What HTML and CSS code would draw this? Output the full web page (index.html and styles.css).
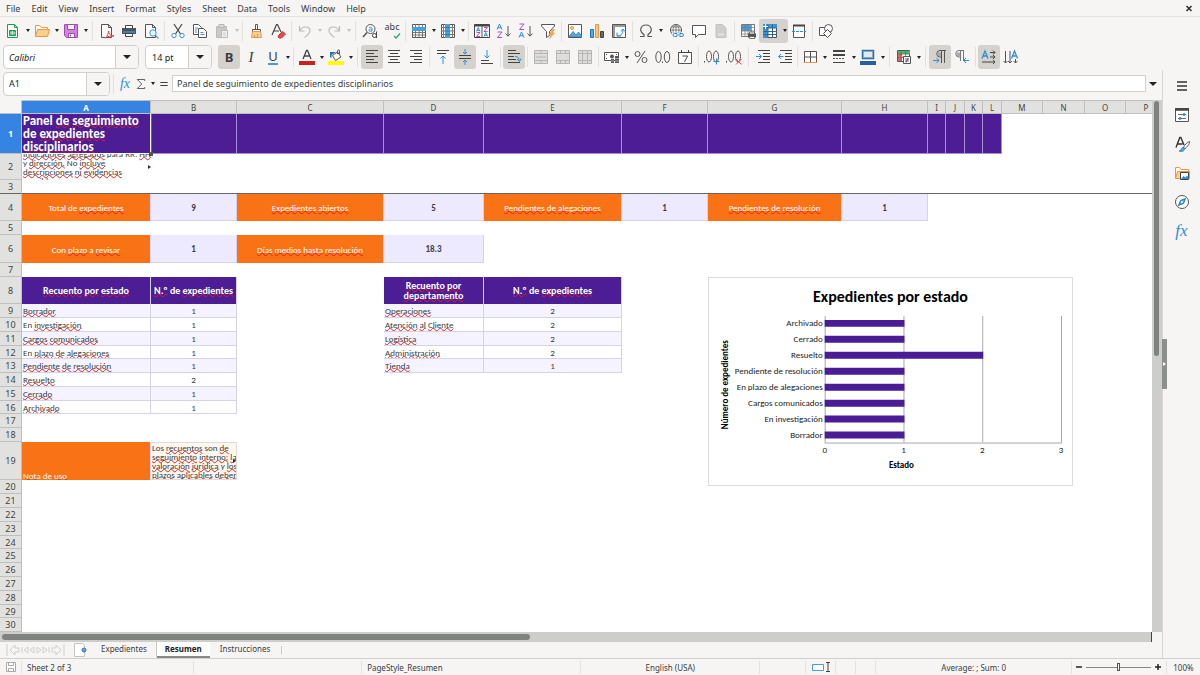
FILE: index.html
```html
<!DOCTYPE html>
<html lang="es">
<head>
<meta charset="utf-8">
<meta name="viewport" content="width=device-width, initial-scale=1">
<title>Panel de seguimiento de expedientes disciplinarios</title>
<link rel="stylesheet" href="styles.css">
</head>
<body>
<div class="app">

<header class="menubar" lang="en">
  <nav class="menus">
    <button>File</button><button>Edit</button><button>View</button><button>Insert</button><button>Format</button><button>Styles</button><button>Sheet</button><button>Data</button><button>Tools</button><button>Window</button><button>Help</button>
  </nav>
  <button class="close" aria-label="Close document"><svg viewBox="0 0 8 8"><path d="M1.500 2l5 5M6.500 2l-5 5" stroke="#2e3436" stroke-width="1.600"/></svg></button>
</header>

<div class="toolbar" role="toolbar" aria-label="Standard">
  <button class="tb" aria-label="New"><svg viewBox="0 0 16 16"><path d="M2.500 1.500h7l3 3v10h-10z" fill="#fff" stroke="#1b9e4b"/><path d="M9.500 1.500v3h3" stroke="#1b9e4b"/><path d="M4.500 7.500h6v5h-6z" fill="#55bd78" stroke="#1b9e4b"/><path d="M5 10h6M7.500 8v4" stroke="#fff" stroke-width=".6"/></svg></button><button class="caret" aria-label="New options"></button>
  <button class="tb" aria-label="Open"><svg viewBox="0 0 16 16"><path d="M1.500 13.500v-11h4l2 2h6v2" fill="#fff" stroke="#e8974a"/><path d="M1.500 13.500l2-7h12l-2 7z" fill="#fbd08a" stroke="#e8974a"/></svg></button><button class="caret" aria-label="Open options"></button>
  <button class="tb" aria-label="Save"><svg viewBox="0 0 16 16"><path d="M1.500 1.500h13v13h-11l-2-2z" fill="#cf86d6" stroke="#a04cab"/><path d="M4.500 1.500h7v5h-7z" fill="#f4f4f4" stroke="#a04cab"/><path d="M5.500 10.500h6v4h-6z" fill="#fff" stroke="#a04cab"/><path d="M7.500 11.500v2" stroke="#a04cab"/></svg></button><button class="caret" aria-label="Save options"></button>
  <span class="sep wide"></span>
  <button class="tb" aria-label="Export as PDF"><svg viewBox="0 0 16 16"><path d="M2.500 1.500h7l3 3v10h-10z" fill="#fafafa" stroke="#555"/><path d="M9.500 1.500v3h3" stroke="#555"/><path d="M6.500 15c2-2 3-5 3-7 1 4 3 5 5.500 5-3-.5-6 .2-8.500 2z" stroke="#e03b3b" fill="#fff"/></svg></button>
  <button class="tb" aria-label="Print"><svg viewBox="0 0 16 16"><path d="M4.500 5V2.500h7V5" fill="#fff" stroke="#444"/><path d="M1 5h14v6H1z" fill="#505356"/><path d="M2 9h12" stroke="#3d8fd1" stroke-width="1.500"/><path d="M4.500 10.500h7v3h-7z" fill="#fff" stroke="#444"/></svg></button>
  <button class="tb" aria-label="Print Preview"><svg viewBox="0 0 16 16"><path d="M2.500 1.500h7l3 3v10h-10z" fill="#fafafa" stroke="#555"/><path d="M9.500 1.500v3h3" stroke="#555"/><circle cx="10" cy="10" r="3.200" fill="#e8f3fb" stroke="#4596cf"/><path d="M12.400 12.400l3 3" stroke="#4596cf" stroke-width="1.300"/></svg></button>
  <span class="sep"></span>
  <button class="tb" aria-label="Cut"><svg viewBox="0 0 16 16"><path d="M4 1l6.500 10M12 1L5.500 11" stroke="#444" stroke-width="1.200"/><circle cx="4" cy="12.500" r="2.200" stroke="#4596cf"/><circle cx="12" cy="12.500" r="2.200" stroke="#4596cf"/></svg></button>
  <button class="tb" aria-label="Copy"><svg viewBox="0 0 16 16"><path d="M1.500 1.500h5l3 3v7h-8z" fill="#fff" stroke="#555"/><path d="M6.500 5.500h5l3 3v6h-8z" fill="#fff" stroke="#555"/><path d="M3 5h3M3 7h2M3 9h2M8.500 9.500h3M8.500 11.500h4" stroke="#4596cf"/></svg></button>
  <button class="tb" aria-label="Paste" disabled><svg viewBox="0 0 16 16"><path d="M2.500 3.500h10v11h-10z" fill="#c9c8c7" stroke="#bbb"/><path d="M5 1.500h5v3H5z" fill="#ddd" stroke="#b5b5b5"/><path d="M7.500 7.500h6v7h-6z" fill="#f0f0f0" stroke="#bbb"/><path d="M9 10h3M9 12h3" stroke="#ccc"/></svg></button><button class="caret dim" aria-label="Paste options"></button>
  <span class="sep"></span>
  <button class="tb" aria-label="Clone Formatting"><svg viewBox="0 0 16 16"><path d="M7.500 1.500h2v5h-2zM4.500 6.500h8v2h-8z" fill="#fff" stroke="#555"/><path d="M4.500 8.500h8l1 6h-10z" fill="#fbd08a" stroke="#e8974a"/><path d="M6.500 14v-2M9.500 14v-3" stroke="#e8974a"/></svg></button>
  <button class="tb" aria-label="Clear Direct Formatting"><svg viewBox="0 0 16 16"><path d="M2 12L6.500 1.500h1L11 9M4 8h5" stroke="#444" stroke-width="1.200"/><path d="M8 13l4.500-4.500 3 2.500-4 4H9z" fill="#e8484b" stroke="#c93338"/></svg></button>
  <span class="sep"></span>
  <button class="tb" aria-label="Undo" disabled><svg viewBox="0 0 16 16"><path d="M2.500 3v5h5M2.500 8C5 3 13 2.500 13 7.500c0 3-3 5-5.500 7" stroke="#bbb" stroke-width="1.200"/></svg></button><button class="caret dim" aria-label="Undo list"></button>
  <button class="tb" aria-label="Redo" disabled><svg viewBox="0 0 16 16"><path d="M13.500 3v5h-5M13.500 8C11 3 3 2.500 3 7.500c0 3 3 5 5.500 7" stroke="#bbb" stroke-width="1.200"/></svg></button><button class="caret dim" aria-label="Redo list"></button>
  <span class="sep wide"></span>
  <button class="tb" aria-label="Find and Replace"><svg viewBox="0 0 16 16"><circle cx="8.500" cy="6" r="4.500" fill="#fff" stroke="#555"/><path d="M5 9.500L1 14" stroke="#555" stroke-width="1.500"/><path d="M7 4.500c2-1 3 0 3 1v2.500c-2.500.8-3.500-.2-3-1.200.5-.8 2-.7 3-.5" stroke="#2f8fd6"/><circle cx="12.500" cy="12.500" r="2" stroke="#444"/><path d="M14.500 8.500v6.500" stroke="#444"/></svg></button>
  <button class="tb" aria-label="Spelling"><span class="glyph abc">abc</span><svg class="tick" viewBox="0 0 8 6"><path d="M1 3l2 2 4-4.500" stroke="#2aa876" stroke-width="1.300"/></svg></button>
  <span class="sep"></span>
  <button class="tb" aria-label="Row"><svg viewBox="0 0 16 16"><path d="M1.500 1.500h13v13h-13z" fill="#fff" stroke="#555"/><path d="M4.500 1.500v13M8 1.500v13M11.500 1.500v13M1.500 9.500h13M1.500 12h13" stroke="#777"/><path d="M1 4h14v4H1z" fill="#49a0df"/></svg></button><button class="caret" aria-label="Row options"></button>
  <button class="tb" aria-label="Column"><svg viewBox="0 0 16 16"><path d="M1.500 1.500h13v13h-13z" fill="#fff" stroke="#555"/><path d="M1.500 4.500h13M1.500 8h13M1.500 11.500h13M3.500 1.500v13M12.500 1.500v13" stroke="#777"/><path d="M5 1h5v14H5z" fill="#49a0df"/><path d="M5 4.500h5M5 8h5M5 11.500h5" stroke="#2b78b5"/></svg></button><button class="caret" aria-label="Column options"></button>
  <span class="sep"></span>
  <button class="tb" aria-label="Sort"><svg viewBox="0 0 16 16"><path d="M.5 1.500h15v13H.5z" fill="#fff" stroke="#444"/><path d="M.5 2.500h15" stroke="#444" stroke-width="2"/><path d="M8 3v12" stroke="#555"/><path d="M2.500 8.500L4.200 4.500 6 8.500M3 7.300h2.500M10 13.500L11.800 9.500l1.700 4M10.500 12.300H13" stroke="#2f8fd6"/><path d="M2.500 9.500H6l-3.500 4H6M10 4.500h3.500l-3.500 4h3.500" stroke="#b04fbd"/></svg></button>
  <button class="tb" aria-label="Sort Ascending"><svg viewBox="0 0 16 16"><path d="M1 6.500L3.500 1 6 6.500M2 4.800h3" stroke="#2f8fd6"/><path d="M1.500 9H6l-4.500 5.500H6" stroke="#b04fbd"/><path d="M12 3v10M9.500 10.500L12 13.200l2.500-2.700" stroke="#555"/></svg></button>
  <button class="tb" aria-label="Sort Descending"><svg viewBox="0 0 16 16"><path d="M1 14.500L3.500 9 6 14.500M2 12.800h3" stroke="#2f8fd6"/><path d="M1.500 1H6L1.500 6.500H6" stroke="#b04fbd"/><path d="M12 3v10M9.500 10.500L12 13.200l2.500-2.700" stroke="#555"/></svg></button>
  <button class="tb" aria-label="AutoFilter"><svg viewBox="0 0 16 16"><path d="M1.500 1.500h13v1.500L9.500 8.500v4l-3 2v-6L1.500 3z" fill="#fff" stroke="#555"/><path d="M12.500 6.500L9 11.500h2.500L9.500 15.500l5-5.500h-2.300l2.300-3.500z" fill="#f9a94b" stroke="#e8913a" stroke-width=".6"/></svg></button>
  <span class="sep"></span>
  <button class="tb" aria-label="Insert Image"><svg viewBox="0 0 16 16"><path d="M1.500 1.500h13v13h-13z" fill="#fff" stroke="#555"/><path d="M2 13.500l4-5 3 3.500 2.500-3 3 3.500v1.500z" fill="#58a9e2" stroke="#2b78b5" stroke-width=".8"/><circle cx="5" cy="5" r="1.500" fill="#fbd08a" stroke="#e8974a"/></svg></button>
  <button class="tb" aria-label="Insert Chart"><svg viewBox="0 0 16 16"><path d="M1.500 6.500h3v8h-3z" fill="#58a9e2" stroke="#2573b4"/><path d="M6.500 1.500h3v13h-3z" fill="#fbc47d" stroke="#e8974a"/><path d="M11.500 8.500h3v6h-3z" fill="#686b6e" stroke="#444"/></svg></button>
  <button class="tb" aria-label="Insert Pivot Table"><svg viewBox="0 0 16 16"><path d="M1.500 1.500h13v13h-13z" fill="#fff" stroke="#555"/><path d="M2 3h12M3 3v11" stroke="#999" stroke-width="2"/><path d="M6 9.500v3.500h4M6 13c4 0 6-2 6-6.500M10 8.500l2-2.500 2 2.500" stroke="#2f8fd6"/></svg></button>
  <span class="sep"></span>
  <button class="tb" aria-label="Special Character"><svg viewBox="0 0 16 16"><path d="M2 13.500h4v-2C3.500 10 2.500 8 2.800 6 3.200 3.500 5.500 2 8 2s4.800 1.500 5.200 4c.3 2-.7 4-3.200 5.500v2h4" stroke="#555" stroke-width="1.200"/></svg></button><button class="caret" aria-label="Special character options"></button>
  <span class="spacer"></span>
  <button class="tb" aria-label="Hyperlink"><svg viewBox="0 0 16 16"><circle cx="7" cy="7" r="5.500" fill="#fff" stroke="#555"/><path d="M7 1.500v11M1.500 7h11M2.500 4h9M2.500 10h9M7 1.500c-4 3-4 8 0 11M7 1.500c4 3 4 8 0 11" stroke="#666" stroke-width=".8"/><path d="M3 9.500h12.500v5H3z" fill="#f6f5f4"/><path d="M8 10.500H5.500a1.500 1.500 0 000 3H8M10.500 10.500H13a1.500 1.500 0 010 3h-2.500M7 12h5" stroke="#2f8fd6"/></svg></button>
  <button class="tb" aria-label="Comment"><svg viewBox="0 0 16 16"><path d="M1.500 2.500h13v9h-7l-3 3v-3h-3z" fill="#fff" stroke="#555"/></svg></button>
  <button class="tb" aria-label="Headers and Footers" disabled><svg viewBox="0 0 16 16"><path d="M3 1.500h6.500l3.500 3.500v9.500H3z" fill="#cfcecd" stroke="#c2c2c2"/><path d="M5 10.500h6v2H5z" fill="#e2e2e2"/></svg></button>
  <span class="sep"></span>
  <button class="tb" aria-label="Define Print Area"><svg viewBox="0 0 16 16"><path d="M1.500 1.500h13v12h-13z" fill="#fff" stroke="#777"/><path d="M2 2h9v6H2z" fill="#49a0df"/><path d="M1.500 4.500h13M1.500 8h13M1.500 11h13M5 1.500v12M8 1.500v12M11.500 1.500v12" stroke="#777" stroke-width=".7"/><path d="M8 10.500h8v4H8z" fill="#505356"/><path d="M9.500 9h5v2h-5zM9.500 13.500h5v2h-5z" fill="#fff" stroke="#555" stroke-width=".8"/></svg></button>
  <span class="on"><button class="tb" aria-label="Freeze Rows and Columns"><svg viewBox="0 0 16 16"><path d="M1.500 1.500h13v13h-13z" fill="#fff" stroke="#555"/><path d="M1 1h14v4H1zM1 1h5v14H1z" fill="#3b92d6"/><path d="M1.500 5h13M1.500 8.500h13M1.500 11.500h13M6 1.500v13M10.500 1.500v13" stroke="#35658c"/><path d="M3.500 1v5M1 3.500h5" stroke="#fff"/></svg></button><button class="caret" aria-label="Freeze options"></button></span>
  <button class="tb" aria-label="Split Window"><svg viewBox="0 0 16 16"><path d="M2.500 2.500h11v12h-11z" fill="#fff" stroke="#555"/><path d="M2 2.500h12" stroke="#444" stroke-width="2"/><path d="M1 8.500h14" stroke="#2f8fd6" stroke-dasharray="3 1"/></svg></button>
  <span class="sep"></span>
  <button class="tb" aria-label="Show Draw Functions"><svg viewBox="0 0 16 16"><path d="M1.500 4.500h8v8h-8z" stroke="#555" fill="#fff"/><circle cx="10.500" cy="5.500" r="4" stroke="#555" fill="#fff"/><path d="M9.500 6.500l4 4-4 4-4-4z" stroke="#555" fill="#fff"/></svg></button>
</div>

<div class="toolbar formatting" role="toolbar" aria-label="Formatting">
  <div class="combo font"><input aria-label="Font Name" value="Calibri"><button aria-label="Font list"></button></div>
  <div class="combo size"><input aria-label="Font Size" value="14 pt"><button aria-label="Size list"></button></div>
  <button class="tb on" aria-label="Bold"><span class="glyph bold">B</span></button>
  <button class="tb" aria-label="Italic"><span class="glyph italic">I</span></button>
  <button class="tb" aria-label="Underline"><span class="glyph under">U</span></button><button class="caret" aria-label="Underline options"></button>
  <span class="sep"></span>
  <button class="tb" aria-label="Font Color"><svg viewBox="0 0 16 16"><path d="M4 10L7.500 1.500h1L12 10M5.200 7h5.600" stroke="#444" stroke-width="1.300"/><path d="M0 12h16v4H0z" fill="#c9211e"/></svg></button><button class="caret" aria-label="Font color options"></button>
  <button class="tb" aria-label="Background Color"><svg viewBox="0 0 16 16"><path d="M4.500 6.500l5-3.500 3.500 5-5.500 3.500z" fill="#fff" stroke="#555"/><path d="M9.500 5V2c0-1.500 2-1.500 2 0v3" stroke="#555"/><path d="M2 8V3h6L3.500 6v3z" fill="#2573b4"/><path d="M0 12h16v4H0z" fill="#ff0"/></svg></button><button class="caret" aria-label="Background color options"></button>
  <span class="sep wide"></span>
  <button class="tb on" aria-label="Align Left"><svg viewBox="0 0 16 16"><path d="M2 1.500h12M2 4.500h8M2 7.500h12M2 10.500h8M2 13.500h12" stroke="#444"/></svg></button>
  <button class="tb" aria-label="Center Horizontally"><svg viewBox="0 0 16 16"><path d="M2 1.500h12M4 4.500h8M2 7.500h12M4 10.500h8M2 13.500h12" stroke="#444"/></svg></button>
  <button class="tb" aria-label="Align Right"><svg viewBox="0 0 16 16"><path d="M2 1.500h12M6 4.500h8M2 7.500h12M6 10.500h8M2 13.500h12" stroke="#444"/></svg></button>
  <span class="sep"></span>
  <button class="tb" aria-label="Align Top"><svg viewBox="0 0 16 16"><path d="M2 1.500h12M2 4.500h9" stroke="#444"/><path d="M8 15V7M5.500 9.500L8 7l2.500 2.500" stroke="#2f8fd6"/></svg></button>
  <button class="tb on" aria-label="Center Vertically"><svg viewBox="0 0 16 16"><path d="M2 6.500h12M2 9.500h12" stroke="#444"/><path d="M8 0v5M6 3l2 2 2-2M8 16v-5M6 13l2-2 2 2" stroke="#2f8fd6"/></svg></button>
  <button class="tb" aria-label="Align Bottom"><svg viewBox="0 0 16 16"><path d="M2 11.500h8M2 14.500h12" stroke="#444"/><path d="M8 1v8M5.500 6.500L8 9l2.500-2.500" stroke="#2f8fd6"/></svg></button>
  <span class="sep"></span>
  <button class="tb on" aria-label="Wrap Text"><svg viewBox="0 0 16 16"><path d="M2 1.500h8M2 4.500h12M2 7.500h6M2 10.500h8M2 13.500h12" stroke="#444"/><path d="M9 7.500c3 0 4 1 4 4M11 10l2.500 2.500L15 9.500" stroke="#2f8fd6"/></svg></button>
  <span class="sep"></span>
  <button class="tb" aria-label="Merge and Center" disabled><svg viewBox="0 0 16 16"><path d="M1.500 1.500h13v13h-13z" fill="#dedddc" stroke="#b5b5b5"/><path d="M1.500 4.500h13M1.500 11.500h13M8 1.500v3M8 11.500v3M3 8h10" stroke="#b5b5b5"/></svg></button>
  <button class="tb" aria-label="Merge Cells" disabled><svg viewBox="0 0 16 16"><path d="M1.500 1.500h13v13h-13z" fill="#dedddc" stroke="#b5b5b5"/><path d="M1.500 4.500h13M1.500 11.500h13M5.500 1.500v3M10.500 1.500v3M5.500 11.500v3M10.500 11.500v3" stroke="#b5b5b5"/></svg></button>
  <button class="tb" aria-label="Unmerge Cells" disabled><svg viewBox="0 0 16 16"><path d="M1.500 1.500h13v13h-13z" fill="#dedddc" stroke="#b5b5b5"/><path d="M1.500 4.500h13M1.500 11.500h13M5.500 1.500v13M10.500 1.500v13" stroke="#b5b5b5"/></svg></button>
  <span class="sep"></span>
  <button class="tb" aria-label="Format as Currency"><svg viewBox="0 0 16 16"><path d="M.5 3.500h14v8H.5z" fill="#fff" stroke="#555"/><circle cx="8" cy="7.500" r="2" fill="#555"/><path d="M2 5.500h1M12 5.500h1M2 9.500h1" stroke="#555"/><path d="M7 10h3v4H7zM11 7h4v7h-4z" fill="#55585b"/><path d="M7 12h3M11 9.500h4M11 12h4" stroke="#ddd" stroke-width=".6"/></svg></button><button class="caret" aria-label="Currency options"></button>
  <button class="tb" aria-label="Format as Percent"><svg viewBox="0 0 16 16"><circle cx="4.500" cy="5" r="2.500" stroke="#555"/><circle cx="11.500" cy="11" r="2.500" stroke="#555"/><path d="M12 2L4 14" stroke="#555"/></svg></button>
  <button class="tb" aria-label="Format as Number"><svg viewBox="0 0 16 16"><ellipse cx="3.500" cy="8" rx="2.700" ry="5.500" stroke="#555"/><path d="M7.500 12.500v1.500" stroke="#555"/><ellipse cx="12" cy="8" rx="2.700" ry="5.500" stroke="#555"/></svg></button>
  <button class="tb" aria-label="Format as Date"><svg viewBox="0 0 16 16"><path d="M1.500 3.500h13v11h-13z" fill="#fff" stroke="#555"/><path d="M1.500 3.500h13M4.500 1v3M11.500 1v3" stroke="#444"/><path d="M5.500 7h5l-3 6" stroke="#444"/></svg></button>
  <span class="sep"></span>
  <button class="tb" aria-label="Add Decimal Place"><svg viewBox="0 0 16 16"><path d="M.5 12v1.500" stroke="#444"/><ellipse cx="5" cy="7.500" rx="2.500" ry="5.500" stroke="#555"/><ellipse cx="12" cy="7.500" rx="2.500" ry="5.500" stroke="#555"/><path d="M9.500 12.500h6M12.500 9.500v6" stroke="#2f8fd6"/></svg></button>
  <button class="tb" aria-label="Delete Decimal Place"><svg viewBox="0 0 16 16"><path d="M.5 12v1.500" stroke="#444"/><ellipse cx="5" cy="7.500" rx="2.500" ry="5.500" stroke="#555"/><ellipse cx="12" cy="7.500" rx="2.500" ry="5.500" stroke="#555"/><path d="M10 10l5.500 5.500M15.500 10L10 15.500" stroke="#e8484b"/></svg></button>
  <span class="sep wide"></span>
  <button class="tb" aria-label="Increase Indent"><svg viewBox="0 0 16 16"><path d="M3 1.500h12M8 4.500h7M8 7.500h7M8 10.500h7M3 13.500h12" stroke="#444"/><path d="M1 7.500h5M4 5l2.500 2.500L4 10" stroke="#2f8fd6"/></svg></button>
  <button class="tb" aria-label="Decrease Indent"><svg viewBox="0 0 16 16"><path d="M3 1.500h12M8 4.500h7M8 7.500h7M8 10.500h7M3 13.500h12" stroke="#444"/><path d="M6.500 7.500h-5M4 5L1.500 7.500 4 10" stroke="#2f8fd6"/></svg></button>
  <span class="sep tight"></span>
  <button class="tb" aria-label="Borders"><svg viewBox="0 0 16 16"><path d="M2.500 2.500h12v11h-12zM8.500 2.500v11M2.500 8h12" stroke="#555" fill="#fff"/><path d="M2 13.500h13" stroke="#e8974a"/></svg></button><button class="caret" aria-label="Border options"></button>
  <button class="tb" aria-label="Border Style"><svg viewBox="0 0 16 16"><path d="M2 2h12" stroke="#444" stroke-width="2"/><path d="M2 6h12" stroke="#444" stroke-width="2"/><path d="M2 9.500h12" stroke="#555" stroke-dasharray="2 1"/><path d="M2 13.500h12" stroke="#444"/></svg></button><button class="caret" aria-label="Border style options"></button>
  <button class="tb" aria-label="Border Color"><svg viewBox="0 0 16 16"><path d="M2.500 1.500h11v8h-11z" fill="#dcebf8" stroke="#2573b4" stroke-width="1.500"/><path d="M3.500 2.500h9v6h-9z" stroke="#999" stroke-width=".8"/><path d="M0 12h16v4H0z" fill="#2a6099"/></svg></button><button class="caret" aria-label="Border color options"></button>
  <span class="sep wide"></span>
  <button class="tb" aria-label="Conditional Formatting"><svg viewBox="0 0 16 16"><path d="M1.500 1.500h12v11h-12z" fill="#fff" stroke="#555"/><path d="M2 2h12v3H2z" fill="#4cb86e"/><path d="M2 5h4v7H2z" fill="#ea6466"/><path d="M5 7h5v2H5z" fill="#f9c06b"/><path d="M1.500 5h12M1.500 8.500h12M5 1.500v11M9.500 1.500v11" stroke="#666" stroke-width=".8"/><path d="M7.500 7.500h7v7h-7z" fill="#fff" stroke="#555"/><path d="M9 10h4M9 12h4M12 9l-2 4.500" stroke="#444" stroke-width=".8"/></svg></button><button class="caret" aria-label="Conditional options"></button>
  <span class="sep wide"></span>
  <button class="tb on" aria-label="Left-To-Right"><svg viewBox="0 0 16 16"><path d="M14 1.500H8a3 3 0 000 6.500h1M9.500 1.500V14M12.500 1.500V14" stroke="#555"/><path d="M6 3.500h3v4H7a2.500 2.500 0 01-1-4z" fill="#aaa"/><path d="M1 11.500h6M4.500 9L7 11.500 4.500 14" stroke="#2f8fd6"/></svg></button>
  <button class="tb" aria-label="Right-To-Left"><svg viewBox="0 0 16 16"><path d="M10 1.500H5a3 3 0 000 6.500h1M6.500 1.500V12M9.500 1.500V12" stroke="#777"/><path d="M3 3.500h3v4H4a2.500 2.500 0 01-1-4z" fill="#aaa"/><path d="M15 11.500H9.500M12 9l-2.500 2.500L12 14" stroke="#2f8fd6"/></svg></button>
  <span class="sep"></span>
  <button class="tb on" aria-label="Text direction from left to right"><svg viewBox="0 0 16 16"><path d="M1 9.500L4 2l3 7.500M2 7h4" stroke="#2f8fd6" stroke-width="1.300"/><path d="M9 3.500h5M12 1.500l2 2-2 2M9 8h5M12 6l2 2-2 2M1 13h13M12 11l2 2-2 2" stroke="#444"/></svg></button>
  <button class="tb" aria-label="Text direction from top to bottom"><svg viewBox="0 0 16 16"><path d="M8.500 9.500L11.500 2l3 7.500M9.500 7h4" stroke="#2f8fd6" stroke-width="1.300"/><path d="M2.500 2v12M.5 12l2 2 2-2M7 2v12M5 12l2 2 2-2M12.500 10v4M10.500 12l2 2 2-2" stroke="#555"/></svg></button>
</div>

<div class="main">
  <div class="work">
    <div class="formulabar">
      <div class="combo name"><input aria-label="Name Box" value="A1"><button aria-label="Names"></button></div>
      <span class="line"></span>
      <button class="fb" aria-label="Function Wizard"><span class="fx">fx</span></button>
      <button class="fb" aria-label="Select Function"><svg viewBox="0 0 16 16"><path d="M13 4V2H3l6 6-6 6h10v-2" stroke="#555" stroke-width="1.200"/></svg></button><button class="caret" aria-label="Function options"></button>
      <button class="fb" aria-label="Formula"><svg viewBox="0 0 16 16"><path d="M3 6h10M3 10h10" stroke="#444" stroke-width="1.600"/></svg></button>
      <input class="formula" aria-label="Input line" value="Panel de seguimiento de expedientes disciplinarios">
      <button class="expand" aria-label="Expand Formula Bar"></button>
    </div>

    <div class="view">
      <div class="sheet">
        <table class="grid">
          <colgroup><col class="w22"><col class="w129"><col class="w86"><col class="w147"><col class="w100"><col class="w138"><col class="w86"><col class="w134"><col class="w86"><col class="w18"><col class="w19"><col class="w18"><col class="w19"><col class="w41"><col class="w42"><col class="w41"><col class="w41"></colgroup>
          <thead><tr><th class="corner"></th><th class="sel">A</th><th>B</th><th>C</th><th>D</th><th>E</th><th>F</th><th>G</th><th>H</th><th>I</th><th>J</th><th>K</th><th>L</th><th>M</th><th>N</th><th>O</th><th>P</th></tr></thead>
          <tbody>
            <tr class="h40"><th class="sel">1</th><td class="title cursor"><div class="clip">Panel <s>de</s> <s>seguimiento</s><br>de <s>expedientes</s><br><s>disciplinarios</s></div></td><td class="title"></td><td class="title"></td><td class="title"></td><td class="title"></td><td class="title"></td><td class="title"></td><td class="title"></td><td class="title"></td><td class="title"></td><td class="title"></td><td class="title"></td><td colspan="4"></td></tr>
            <tr class="h26"><th>2</th><td class="note more"><div class="clip"><p><s>Indicadores</s> <s>agregados</s> para RR. <s>HH.</s><br>y <s>dirección.</s> No <s>incluye</s><br><s>descripciones</s> <s>ni</s> <s>evidencias</s><br><s>sensibles.</s></p></div></td><td colspan="15"></td></tr>
            <tr class="h14 frozen"><th>3</th><td colspan="16"></td></tr>
            <tr class="h27"><th>4</th><td class="kpi">Total de <s>expedientes</s></td><td class="val">9</td><td class="kpi"><s>Expedientes</s> <s>abiertos</s></td><td class="val">5</td><td class="kpi"><s>Pendientes</s> <s>de</s> <s>alegaciones</s></td><td class="val">1</td><td class="kpi"><s>Pendientes</s> <s>de</s> <s>resolución</s></td><td class="val">1</td><td colspan="8"></td></tr>
            <tr class="h14"><th>5</th><td colspan="16"></td></tr>
            <tr class="h28"><th>6</th><td class="kpi">Con <s>plazo</s> a <s>revisar</s></td><td class="val">1</td><td class="kpi"><s>Días</s> <s>medios</s> <s>hasta</s> <s>resolución</s></td><td class="val">18.3</td><td colspan="12"></td></tr>
            <tr class="h14"><th>7</th><td colspan="16"></td></tr>
            <tr class="h27"><th>8</th><td class="head"><s>Recuento</s> <s>por</s> <s>estado</s></td><td class="head"><s>N.º</s> de <s>expedientes</s></td><td></td><td class="head"><s>Recuento</s> <s>por</s> <s>departamento</s></td><td class="head"><s>N.º</s> de <s>expedientes</s></td><td colspan="11"></td></tr>
            <tr class="h14 alt"><th>9</th><td class="txt"><s>Borrador</s></td><td class="num">1</td><td></td><td class="txt"><s>Operaciones</s></td><td class="num">2</td><td colspan="11"></td></tr>
            <tr class="h14"><th>10</th><td class="txt">En <s>investigación</s></td><td class="num">1</td><td></td><td class="txt"><s>Atención</s> <s>al</s> <s>Cliente</s></td><td class="num">2</td><td colspan="11"></td></tr>
            <tr class="h14 alt"><th>11</th><td class="txt"><s>Cargos</s> <s>comunicados</s></td><td class="num">1</td><td></td><td class="txt"><s>Logística</s></td><td class="num">2</td><td colspan="11"></td></tr>
            <tr class="h13"><th>12</th><td class="txt">En <s>plazo</s> <s>de</s> <s>alegaciones</s></td><td class="num">1</td><td></td><td class="txt"><s>Administración</s></td><td class="num">2</td><td colspan="11"></td></tr>
            <tr class="h14 alt"><th>13</th><td class="txt"><s>Pendiente</s> <s>de</s> <s>resolución</s></td><td class="num">1</td><td></td><td class="txt"><s>Tienda</s></td><td class="num">1</td><td colspan="11"></td></tr>
            <tr class="h14"><th>14</th><td class="txt"><s>Resuelto</s></td><td class="num">2</td><td colspan="14"></td></tr>
            <tr class="h14 alt"><th>15</th><td class="txt"><s>Cerrado</s></td><td class="num">1</td><td colspan="14"></td></tr>
            <tr class="h13"><th>16</th><td class="txt"><s>Archivado</s></td><td class="num">1</td><td colspan="14"></td></tr>
            <tr class="h14"><th>17</th><td colspan="16"></td></tr>
            <tr class="h14"><th>18</th><td colspan="16"></td></tr>
            <tr class="h38"><th>19</th><td class="kpi foot"><s>Nota</s> de <s>uso</s></td><td class="memo more"><div class="clip">Los <s>recuentos</s> son <s>de</s><br><s>seguimiento</s> <s>interno;</s> <s>la</s><br><s>valoración</s> <s>jurídica</s> y <s>los</s><br><s>plazos</s> <s>aplicables</s> <s>deben</s></div></td><td colspan="14"></td></tr>
            <tr class="h14"><th>20</th><td colspan="16"></td></tr>
            <tr class="h14"><th>21</th><td colspan="16"></td></tr>
            <tr class="h14"><th>22</th><td colspan="16"></td></tr>
            <tr class="h14"><th>23</th><td colspan="16"></td></tr>
            <tr class="h13"><th>24</th><td colspan="16"></td></tr>
            <tr class="h14"><th>25</th><td colspan="16"></td></tr>
            <tr class="h14"><th>26</th><td colspan="16"></td></tr>
            <tr class="h14"><th>27</th><td colspan="16"></td></tr>
            <tr class="h14"><th>28</th><td colspan="16"></td></tr>
            <tr class="h13"><th>29</th><td colspan="16"></td></tr>
            <tr class="h14"><th>30</th><td colspan="16"></td></tr>
          </tbody>
        </table>

        <figure class="chart">
          <svg viewBox="0 0 364 208" role="img" aria-label="Expedientes por estado">
            <text class="ct" x="182" y="24">Expedientes por estado</text>
            <path d="M195.500 38v127M274.500 38v127M353.500 38v127M116.500 38v127M116 165.500h238" stroke="#a8a8a8"/>
            <path fill="#4a1d96" d="M116 42h80v7h-80zM116 58h80v7h-80zM116 74h159v7H116zM116 90h80v7h-80zM116 106h80v7h-80zM116 122h80v7h-80zM116 138h80v7h-80zM116 154h80v7h-80z"/>
            <g class="cl"><text x="114" y="48">Archivado</text><text x="114" y="64">Cerrado</text><text x="114" y="80">Resuelto</text><text x="114" y="96">Pendiente de resolución</text><text x="114" y="112">En plazo de alegaciones</text><text x="114" y="128">Cargos comunicados</text><text x="114" y="144">En investigación</text><text x="114" y="160">Borrador</text></g>
            <g class="cx"><text x="116" y="175">0</text><text x="195" y="175">1</text><text x="274" y="175">2</text><text x="353" y="175">3</text></g>
            <text class="ca" x="193" y="191">Estado</text>
            <text class="ca" transform="translate(19 107) rotate(-90)">Número de expedientes</text>
          </svg>
        </figure>
      </div>
      <div class="vscroll"><div class="thumb"></div></div>
    </div>

    <div class="hscroll"><div class="track"><div class="thumb"></div></div></div>

    <div class="tabs">
      <div class="tabnav">
        <button aria-label="First sheet"><svg viewBox="0 0 14 12"><path d="M1 0v12M4 6l5-5v3h4v4H9v3z" stroke="#cfcecd"/></svg></button>
        <button aria-label="Previous sheet"><svg viewBox="0 0 14 12"><path d="M1 3v6M7 3L3 6l4 3zM13 3L9 6l4 3z" stroke="#cfcecd"/></svg></button>
        <button aria-label="Next sheet"><svg viewBox="0 0 14 12"><path d="M13 3v6M7 3l4 3-4 3zM1 3l4 3-4 3z" stroke="#cfcecd"/></svg></button>
        <button aria-label="Last sheet"><svg viewBox="0 0 14 12"><path d="M13 0v12M10 6L5 1v3H1v4h4v3z" stroke="#cfcecd"/></svg></button>
      </div>
      <button class="addtab" aria-label="Add Sheet"><svg viewBox="0 0 14 14"><path d="M.5.500h8l2 2v11H.5z" fill="#fff" stroke="#c4c4c4"/><circle cx="10" cy="7" r="2" fill="#fff" stroke="#2f68b8"/><path d="M10 5v4M8 7h4" stroke="#2f68b8" stroke-width=".8"/></svg></button>
      <button class="tab">Expedientes</button>
      <button class="tab active">Resumen</button>
      <button class="tab">Instrucciones</button>
      <span class="tabend"></span>
    </div>
  </div>

  <aside class="sidebar" aria-label="Sidebar">
    <button aria-label="Sidebar Settings"><svg viewBox="0 0 16 16"><path d="M3 4h10M3 8h10M3 12h10" stroke="#333" stroke-width="1.500"/></svg></button>
    <button aria-label="Properties"><svg viewBox="0 0 16 16"><path d="M1.500 1.500h13v13h-13z" fill="#fff" stroke="#555"/><path d="M1 2.500h14" stroke="#444" stroke-width="2.500"/><path d="M4 7.500h8M4 11.500h8" stroke="#444" stroke-width=".8"/><path d="M10 6v3M6 10v3" stroke="#2f8fd6" stroke-width="1.600"/></svg></button>
    <button aria-label="Styles"><svg viewBox="0 0 16 16"><path d="M2 11.500L5.800 1.500h1L10 9M3.500 8h5" stroke="#333" stroke-width="1.400"/><path d="M15.500 5.500c-2 .5-5 3.500-6 6l1.500 1.200c2-1.500 5-5 4.500-7.200z" fill="#fff" stroke="#555"/><path d="M5 15c2 0 2-3 4-3.500 2 .5 2 3-.5 3.800C7 15.600 6 15.500 5 15z" fill="#58a9e2" stroke="#2573b4" stroke-width=".8"/></svg></button>
    <button aria-label="Gallery"><svg viewBox="0 0 16 16"><path d="M1.500 13.500v-11h4l1.500 2h7.500v2" fill="#fff" stroke="#e8974a"/><path d="M1.500 13.500l2-7h12v7z" fill="#fbd08a" stroke="#e8974a"/><path d="M6.500 7.500h8v7h-8z" fill="#fff" stroke="#444"/><path d="M7 14l2.500-3 2 1.500 1.500-2 1.500 2V14z" fill="#2f8fd6"/></svg></button>
    <button aria-label="Navigator"><svg viewBox="0 0 16 16"><circle cx="8" cy="8" r="6.500" fill="#fff" stroke="#555"/><path d="M11.500 4.500L9.500 9.500 4.500 11.500 6.500 6.500z" fill="#58a9e2" stroke="#2573b4"/><circle cx="8" cy="8" r="1" fill="#fff"/></svg></button>
    <button aria-label="Functions"><span class="fx big">fx</span></button>
    <button class="sash" aria-label="Hide sidebar"><svg viewBox="0 0 5 6"><path d="M1 1l3 2-3 2z" fill="#fff"/></svg></button>
  </aside>
</div>

<footer class="status" lang="en">
  <span class="s-doc"><svg viewBox="0 0 12 12"><path d="M1.500 1.500h9v9h-9z" stroke="#aaa" fill="#fff"/><path d="M3.500 1.500v3h5v-3M3.500 10.500v-3h5v3" stroke="#aaa"/></svg></span>
  <span class="s-sheet">Sheet 2 of 3</span>
  <span class="s-blank"></span>
  <span class="s-style">PageStyle_Resumen</span>
  <span class="s-lang">English (USA)</span>
  <span class="s-ins"></span>
  <span class="s-sel"><svg viewBox="0 0 20 12"><path d="M1.500 3.500h11v6h-11z" fill="#fff" stroke="#4a9bd4"/><path d="M15 1.500h4M15 10.500h4M17 1.500v9" stroke="#444"/></svg></span>
  <span class="s-tiny"></span>
  <span class="s-tiny"></span>
  <span class="s-sum">Average: ; Sum: 0</span>
  <span class="s-zoom"><button aria-label="Zoom out"><svg viewBox="0 0 8 8"><path d="M1 4h6" stroke="#222" stroke-width="1.500"/></svg></button><input type="range" min="0" max="100" value="50" aria-label="Zoom"><button aria-label="Zoom in"><svg viewBox="0 0 8 8"><path d="M1 4h6M4 1v6" stroke="#222" stroke-width="1.500"/></svg></button></span>
  <span class="s-pct">100%</span>
</footer>
</div>
</body>
</html>
```
FILE: styles.css
```css
* { box-sizing: border-box; }

body {
  margin: 0;
  font-family: "Noto Sans", "Open Sans", sans-serif;
  font-size: 9px;
  color: #3a3d3f;
  background: #f6f5f4;
}

button, input { font: inherit; color: inherit; margin: 0; }
button { padding: 0; border: 0; background: none; }
svg { display: block; fill: none; }
p { margin: 0; }

.app {
  display: flex;
  flex-direction: column;
  height: 100vh;
  overflow: hidden;
}

/* Menu bar */
.menubar {
  display: flex;
  justify-content: space-between;
  flex: none;
  height: 17px;
  padding: 0 7px 0 6px;
  border-bottom: 1px solid #e4e3e1;
}
.menus { display: flex; gap: 11px; }
.close { width: 8px; }

/* Toolbars */
.toolbar {
  display: flex;
  align-items: center;
  flex: none;
  height: 27px;
  padding-left: 2px;
}
.formatting { padding-left: 3px; height: 26px; }
.tb {
  position: relative;
  display: flex;
  align-items: center;
  justify-content: center;
  flex: none;
  width: 22px;
  height: 24px;
  border-radius: 3px;
}
.tb svg { width: 16px; height: 16px; }
.on { display: flex; background: #d5d1cd; border-radius: 3px; }

.caret {
  display: flex;
  align-items: center;
  justify-content: center;
  flex: none;
  width: 7px;
  align-self: center;
}
.on .caret { align-self: stretch; }
.caret::before,
.combo button::before,
.expand::before {
  content: "";
  border: 2px solid transparent;
  border-top: 3px solid #222;
  border-bottom: 0;
}
.caret.dim::before { border-top-color: #c0bfbe; }
.combo button::before,
.expand::before { border-width: 4px 4px 0; }

.sep {
  flex: none;
  width: 1px;
  height: 20px;
  margin: 0 2px;
  background: #e2e0de;
}
.sep.wide { margin: 0 3px; }
.sep.tight { margin: 0 1px; }
.spacer { flex: none; width: 2px; }

.glyph { font-size: 13px; line-height: 18px; }
.abc { font-size: 9px; line-height: 16px; align-self: flex-start; }
.tick { position: absolute; right: 2px; bottom: 4px; }
.tb .tick { width: 8px; height: 6px; }
.bold { font-weight: 700; }
.italic { font-family: "Liberation Serif", serif; font-style: italic; font-size: 15px; }
.under { line-height: 13px; border-bottom: 2px solid #4a9bd4; }

.combo {
  display: flex;
  flex: none;
  height: 24px;
  border: 1px solid #d2cfcb;
  border-radius: 4px;
  background: #fff;
  overflow: hidden;
}
.combo input {
  flex: 1;
  min-width: 0;
  padding: 0 5px;
  border: 0;
  background: none;
  color: #222;
}
.combo button {
  display: flex;
  align-items: center;
  justify-content: center;
  flex: none;
  width: 23px;
  border-left: 1px solid #d2cfcb;
  background: #f6f5f4;
}
.font { width: 136px; margin-right: 6px; }
.font input { font-style: italic; }
.size { width: 67px; margin-right: 6px; }
.size input { padding-left: 6px; }

/* Work area */
.main { display: flex; flex: 1; min-height: 0; }
.work { display: flex; flex-direction: column; flex: 1; min-width: 0; }

.formulabar {
  display: flex;
  align-items: center;
  flex: none;
  height: 30px;
  padding: 0 3px 3px;
}
.name { width: 107px; }
.line { width: 1px; height: 20px; margin: 0 3px; background: #e2e0de; }
.fb { display: flex; align-items: center; justify-content: center; width: 16px; }
.fb svg { width: 12px; height: 12px; }
.fx { font-family: "Liberation Serif", serif; font-style: italic; font-size: 14px; line-height: 16px; color: #2f8fd6; }
.fx.big { font-size: 17px; }
.formula {
  flex: 1;
  min-width: 0;
  height: 17px;
  padding: 0 4px;
  border: 1px solid #d2d0cd;
  background: #fff;
}
.expand { display: flex; justify-content: center; width: 13px; }

/* Grid */
.view { display: flex; flex: 1; min-height: 0; }
.sheet { position: relative; flex: 1; min-width: 0; overflow: hidden; background: #fff; }
.grid {
  width: 1167px;
  table-layout: fixed;
  border-collapse: separate;
  border-spacing: 0;
  font-family: Carlito, Lato, sans-serif;
  font-size: 9px;
  line-height: 9px;
}
.w18 { width: 18px; } .w19 { width: 19px; } .w22 { width: 22px; }
.w41 { width: 41px; } .w42 { width: 42px; } .w86 { width: 86px; }
.w100 { width: 100px; } .w129 { width: 129px; } .w134 { width: 134px; }
.w138 { width: 138px; } .w147 { width: 147px; }

.grid th, .grid td { padding: 0; overflow: hidden; }
.grid th {
  font: 400 9px/11px "Noto Sans", sans-serif;
  text-align: center;
  color: #444;
  background: #e1e1df;
  border-right: 1px solid #c0bfbd;
  border-bottom: 1px solid #c0bfbd;
}
.grid thead th { height: 14px; font-size: 8px; border-top: 1px solid #c0bfbd; }
.grid thead .corner { background: #f6f5f4; border-top-color: #f6f5f4; }
.grid th.sel { background: #3584e4; color: #fff; font-weight: 700; }

.h13 { height: 13px; } .h14 { height: 14px; } .h26 { height: 26px; }
.h27 { height: 27px; } .h28 { height: 28px; } .h38 { height: 38px; } .h40 { height: 40px; }

.grid s {
  text-decoration: underline wavy #e02020 1px;
  text-decoration-skip-ink: none;
  text-underline-offset: -1px;
}
.clip { overflow: hidden; }

.title {
  background: #4c1d95;
  color: #fff;
  border-right: 1px solid #a78fd0;
  border-bottom: 1px solid #a78fd0;
  font-size: 13px;
  font-weight: 700;
  line-height: 13px;
}
.title .clip { height: 39px; padding-left: 1px; white-space: nowrap; }
.grid .cursor { position: relative; overflow: visible; border-color: #fff; box-shadow: 1px 0 #6b6b6b; }
.cursor::after {
  content: "";
  position: absolute;
  right: -3px;
  bottom: -3px;
  width: 4px;
  height: 4px;
  background: #555;
}
.frozen th, .frozen td { border-bottom: 1px solid #666; }
.grid .frozen th { border-bottom-color: #666; }

.more { position: relative; }
.more::after {
  content: "";
  position: absolute;
  right: 0;
  top: 50%;
  margin-top: -2px;
  border: 2px solid transparent;
  border-left: 3px solid #402020;
  border-right: 0;
}
.note .clip { display: flex; align-items: center; height: 26px; padding-left: 1px; white-space: nowrap; }

.kpi {
  background: #f97316;
  color: #fff;
  text-align: center;
  border-right: 1px solid #ddd6fe;
}
.val {
  background: #ede9fe;
  font-weight: 700;
  text-align: center;
  border-right: 1px solid #d5d3e8;
  border-bottom: 1px solid #d5d3e8;
}
.head {
  background: #4c1d95;
  color: #fff;
  font-size: 10px;
  line-height: 10px;
  font-weight: 700;
  text-align: center;
  border-right: 1px solid #d5d3e8;
}
.txt, .num { border-right: 1px solid #d5d3e8; border-bottom: 1px solid #d5d3e8; }
.txt { white-space: nowrap; }
.grid .txt { padding-left: 1px; }
.num { text-align: center; }
.alt .txt, .alt .num { background: #f5f3ff; }
.grid .foot { text-align: left; vertical-align: bottom; padding-left: 1px; }
.memo { background: #fff7ed; border: 1px solid #e0dcd8; border-left: 0; vertical-align: top; }
.memo .clip { height: 36px; padding-left: 1px; white-space: nowrap; }

/* Chart floats over the cells */
.chart {
  position: absolute;
  left: 708px;
  top: 177px;
  width: 365px;
  margin: 0;
  border: 1px solid #dcdcdc;
  background: #fff;
}
.chart text { font-family: Carlito, Lato, sans-serif; font-size: 9px; fill: #222; }
.chart .ct { font-size: 16px; font-weight: 700; text-anchor: middle; fill: #000; }
.chart .cl text { text-anchor: end; }
.chart .cx text, .chart .ca { text-anchor: middle; }
.chart .ca { font-weight: 700; fill: #000; }

/* Scroll bars */
.vscroll { flex: none; width: 10px; padding: 1px 3px 0 2px; background: #cdcdcb; }
.vscroll .thumb { height: 48%; border-radius: 3px; background: #80827f; }
.hscroll { flex: none; height: 10px; padding-right: 10px; }
.track { height: 10px; padding: 2px; background: #cdcdcb; border-right: 1px solid #444; }
.hscroll .thumb { width: 46%; height: 6px; border-radius: 3px; background: #80827f; }

/* Sheet tabs */
.tabs { display: flex; flex: none; height: 16px; font-size: 8px; }
.tabnav { display: flex; align-items: center; gap: 1px; padding: 0 9px 0 6px; }
.tabnav svg { width: 14px; height: 12px; }
.addtab { width: 18px; margin-right: 1px; }
.addtab svg { width: 14px; height: 14px; }
.tab { padding: 0 9px 0 8px; line-height: 14px; border-right: 1px solid #c8c6c3; border-bottom: 2px solid transparent; }
.tab.active { padding: 0 8px; font-weight: 700; color: #222; background: #fff; border-right: 0; border-bottom-color: #888; }
.tab:nth-last-child(2) { border-right: 0; padding-left: 10px; }
.tabend { width: 1px; height: 8px; margin: 4px 2px; background: #c8c6c3; }

/* Sidebar */
.sidebar {
  position: relative;
  display: flex;
  flex-direction: column;
  align-items: center;
  flex: none;
  width: 38px;
  padding-top: 2px;
  border-left: 1px solid #d8d6d3;
}
.sidebar > button { display: flex; align-items: center; justify-content: center; flex: none; width: 24px; height: 29px; }
.sidebar > button:first-child { height: 28px; }
.sidebar svg { width: 16px; height: 16px; }
.sidebar > .sash { position: absolute; left: -1px; top: 269px; width: 5px; height: 50px; background: #8d8f8c; }
.sidebar .sash svg { width: 5px; height: 6px; }

/* Status bar */
.status {
  display: flex;
  align-items: center;
  flex: none;
  height: 17px;
  border-top: 1px solid #d2d0cd;
  font-size: 8px;
}
.status > span { display: flex; align-items: center; justify-content: center; height: 13px; border-right: 1px solid #e4e2e0; }
.status .s-doc { width: 22px; }
.s-doc svg { width: 12px; height: 12px; }
.status .s-sheet { flex: 169; justify-content: flex-start; padding-left: 5px; }
.status .s-blank { flex: 170; }
.status .s-style { flex: 217; justify-content: flex-start; padding-left: 5px; }
.status .s-lang { flex: 181; }
.status .s-ins { flex: 46; }
.status .s-sel { width: 30px; }
.s-sel svg { width: 20px; height: 12px; }
.status .s-tiny { width: 20px; }
.status .s-sum { flex: 198; }
.status .s-zoom { width: 95px; }
.s-zoom button, .s-zoom svg { width: 8px; height: 8px; }
.status .s-pct { width: 33px; border-right: 0; }
.s-zoom input { width: 65px; height: 10px; margin: 0 3px; appearance: none; background: none; }
.s-zoom input::-webkit-slider-runnable-track { height: 1px; background: #888; }
.s-zoom input::-webkit-slider-thumb { appearance: none; width: 3px; height: 8px; margin-top: -4px; border: 1px solid #555; background: #f6f5f4; }
```
